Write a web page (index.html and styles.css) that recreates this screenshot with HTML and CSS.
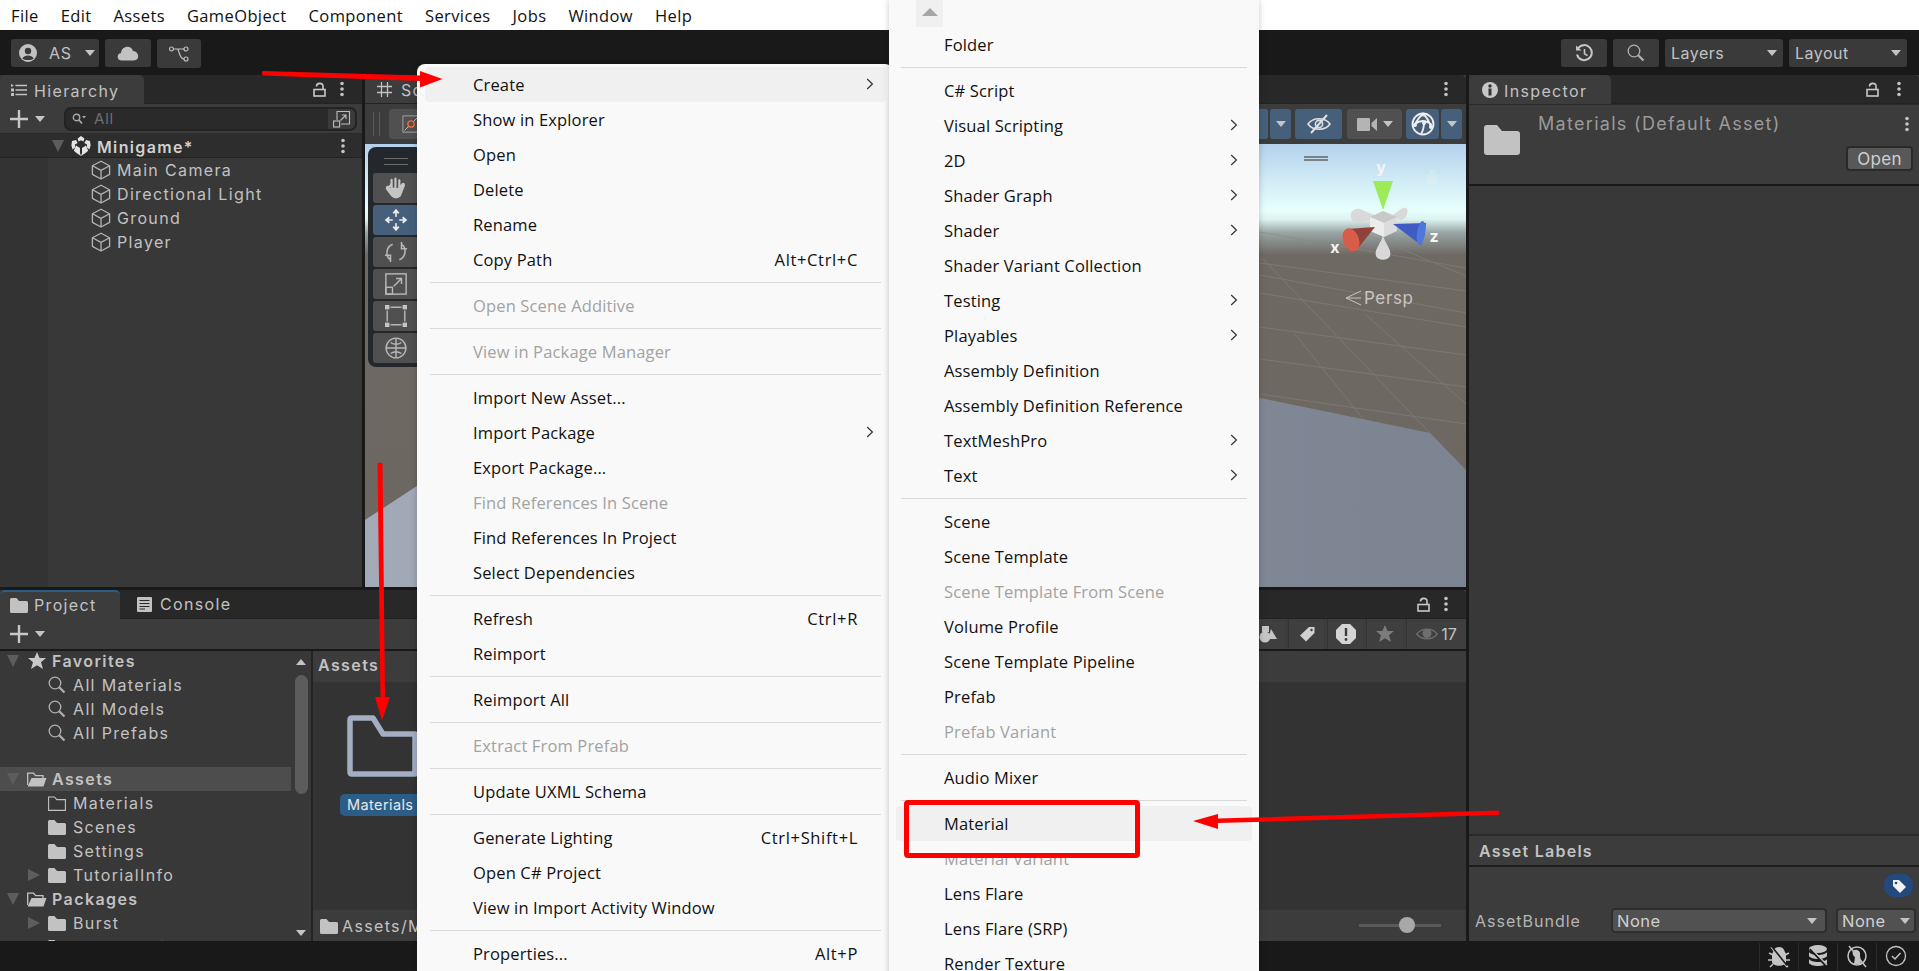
FILE: index.html
```html
<!DOCTYPE html>
<html lang="en">
<head>
<meta charset="utf-8">
<title>Unity Editor</title>
<link rel="stylesheet" href="styles.css">
</head>
<body>
<svg class="defs" width="0" height="0" aria-hidden="true">
  <symbol id="i-folder" viewBox="0 0 18 18"><path d="M0 3.5Q0 2 1.5 2H6.5L9 5H16.5Q18 5 18 6.5V15.5Q18 17 16.5 17H1.5Q0 17 0 15.5Z" fill="#c2c2c2"/></symbol>
  <symbol id="i-folder-open" viewBox="0 0 20 18"><path d="M.7 15V3.2H6.5L8.6 5.7H16V8" fill="none" stroke="#c2c2c2" stroke-width="1.3"/><path d="M.7 16.5L4.5 8H19.5L16.5 16.5Z" fill="#c2c2c2"/></symbol>
  <symbol id="i-folder-line" viewBox="0 0 18 18"><path d="M.6 16.4V3H6.4L8.8 5.6H17.4V16.4Z" fill="none" stroke="#c2c2c2" stroke-width="1.1"/></symbol>
  <symbol id="i-cube" viewBox="0 0 20 20"><path d="M10 1.2L18.6 5.8V14.4L10 19L1.4 14.4V5.8ZM1.4 5.8L10 10.4L18.6 5.8M10 10.4V19" fill="none" stroke="#b4b4b4" stroke-width="1.3" stroke-linejoin="round"/></symbol>
  <symbol id="i-unity" viewBox="0 0 20 20"><path d="M10 0L13.4 2.6L12.4 5.6L10 4.2L7.6 5.6L6.6 2.6ZM1 5L5 4L6.6 7L4 8.6V11.4L1.6 13.6L.4 9.6ZM19 5L19.6 9.6L18.4 13.6L16 11.4V8.6L13.4 7L15 4ZM5 9.5L9 12V17L10 20L5.5 17L2.8 14.8ZM15 9.5L17.2 14.8L14.5 17L10 20L11 17V12Z" fill="#e4e4e4"/></symbol>
  <symbol id="i-search" viewBox="0 0 18 18"><circle cx="7" cy="7" r="5.8" fill="none" stroke="#b0b0b0" stroke-width="1.3"/><path d="M11.2 11.2L16.5 16.5" stroke="#b0b0b0" stroke-width="2.2"/></symbol>
  <symbol id="i-lock" viewBox="0 0 13 15"><rect x="1" y="7.5" width="11" height="6.5" fill="none" stroke="#c8c8c8" stroke-width="1.6"/><path d="M3.5 4.5C3.5 .4 10 .4 10 4V7.5" fill="none" stroke="#c8c8c8" stroke-width="1.6"/></symbol>
  <symbol id="i-kebab" viewBox="0 0 4 16"><circle cx="2" cy="2.5" r="1.8" fill="#c4c4c4"/><circle cx="2" cy="8" r="1.8" fill="#c4c4c4"/><circle cx="2" cy="13.5" r="1.8" fill="#c4c4c4"/></symbol>
  <symbol id="i-plus" viewBox="0 0 18 18"><path d="M9 0V18M0 9H18" stroke="#c8c8c8" stroke-width="2.4"/></symbol>
  <symbol id="i-caret" viewBox="0 0 10 6"><path d="M0 0H10L5 6Z" fill="#c4c4c4"/></symbol>
  <symbol id="i-down" viewBox="0 0 12 12"><path d="M0 0H12L6 12Z" fill="#5d5d5d"/></symbol>
  <symbol id="i-right" viewBox="0 0 12 12"><path d="M0 0L12 6L0 12Z" fill="#5d5d5d"/></symbol>
  <symbol id="i-chev" viewBox="0 0 8 12"><path d="M1.2 1L6.4 6L1.2 11" fill="none" stroke="#333" stroke-width="1.2"/></symbol>
</svg>

<div class="app">
  <nav class="menubar">
    <span class="mb-item">File</span><span class="mb-item">Edit</span><span class="mb-item">Assets</span><span class="mb-item">GameObject</span><span class="mb-item">Component</span><span class="mb-item">Services</span><span class="mb-item">Jobs</span><span class="mb-item">Window</span><span class="mb-item">Help</span>
  </nav>

  <header class="toolbar">
    <div class="tb-group">
      <div class="tb-btn tb-account">
        <svg class="ic18" viewBox="0 0 18 18"><circle cx="9" cy="9" r="9" fill="#c2c2c2"/><circle cx="9" cy="7" r="3.2" fill="#3a3a3a"/><path d="M3.4 14.5C5 10.6 13 10.6 14.6 14.5C13 16.6 5 16.6 3.4 14.5Z" fill="#3a3a3a"/></svg>
        <span class="tb-label">AS</span>
        <svg class="ic-caret" ><use href="#i-caret"/></svg>
      </div>
      <div class="tb-btn tb-cloud">
        <svg class="ic-cloud" viewBox="0 0 22 16"><path d="M5 15.5C-.6 15.5-.6 8.5 4 8C4.5 1 14 -.6 16 6C22.5 6.5 23 15.5 17 15.5Z" fill="#c2c2c2"/></svg>
      </div>
      <div class="tb-btn tb-collab">
        <svg class="ic-collab" viewBox="0 0 20 16"><g fill="none" stroke="#c2c2c2" stroke-width="1.2"><circle cx="2.5" cy="3" r="2"/><circle cx="17" cy="3" r="2"/><circle cx="17" cy="13" r="2"/><path d="M4.5 3H15M8 3C10.5 3 10 13 15 13"/></g></svg>
      </div>
    </div>
    <div class="tb-group">
      <div class="tb-btn tb-square">
        <svg class="ic18" viewBox="0 0 18 18"><path d="M3 4.5A7.5 7.5 0 1 1 2 10.5" fill="none" stroke="#c6c6c6" stroke-width="2"/><path d="M1 1.5L6.5 6.5H1Z" fill="#c6c6c6"/><path d="M9.5 5V9.8L12.5 11.6" fill="none" stroke="#c6c6c6" stroke-width="1.6"/></svg>
      </div>
      <div class="tb-btn tb-square"><svg class="ic18"><use href="#i-search"/></svg></div>
      <div class="tb-btn tb-drop"><span>Layers</span><svg class="ic-caret"><use href="#i-caret"/></svg></div>
      <div class="tb-btn tb-drop"><span>Layout</span><svg class="ic-caret"><use href="#i-caret"/></svg></div>
    </div>
  </header>

  <main class="workspace">
    <div class="left-col">
      <div class="top-row">
        <section class="panel hierarchy">
          <div class="tabstrip">
            <div class="tab">
              <svg class="ic-tab" viewBox="0 0 16 12"><path d="M4.5 1.5H16M4.5 6H16M4.5 10.5H16" stroke="#c2c2c2" stroke-width="1.3"/><path d="M0 0L3 1.5L0 3ZM0 4.5H3V7.5H0ZM0 9H3V12H0Z" fill="#c2c2c2"/></svg>
              <span>Hierarchy</span>
            </div>
            <div class="strip-actions"><svg class="ic-lock"><use href="#i-lock"/></svg><svg class="ic-kebab"><use href="#i-kebab"/></svg></div>
          </div>
          <div class="pbar">
            <div class="add"><svg class="ic-plus"><use href="#i-plus"/></svg><svg class="ic-caret"><use href="#i-caret"/></svg></div>
            <div class="searchbox">
              <div class="sb-field"><svg class="ic-sb" viewBox="0 0 14 12"><circle cx="4.5" cy="4.5" r="3.2" fill="none" stroke="#a8a8a8" stroke-width="1.4"/><path d="M7 7L10 10.5" stroke="#a8a8a8" stroke-width="1.8"/><path d="M10 3H14L12 5.4Z" fill="#a8a8a8"/></svg><span>All</span></div>
              <div class="sb-btn"><svg class="ic18" viewBox="0 0 18 18"><g fill="none" stroke="#bdbdbd" stroke-width="1.1"><path d="M4 10V1.5H16.5V14H8"/><rect x=".6" y="11" width="6" height="6"/><path d="M7.5 10.5L13 5M9 5H13V9"/></g></svg></div>
            </div>
          </div>
          <div class="h-scene">
            <svg class="ic-down-s"><use href="#i-down"/></svg>
            <svg class="ic-unity"><use href="#i-unity"/></svg>
            <strong>Minigame*</strong>
            <svg class="ic-kebab h-kebab"><use href="#i-kebab"/></svg>
          </div>
          <div class="h-body">
            <div class="h-row"><svg class="ic-cube"><use href="#i-cube"/></svg><span>Main Camera</span></div>
            <div class="h-row"><svg class="ic-cube"><use href="#i-cube"/></svg><span>Directional Light</span></div>
            <div class="h-row"><svg class="ic-cube"><use href="#i-cube"/></svg><span>Ground</span></div>
            <div class="h-row"><svg class="ic-cube"><use href="#i-cube"/></svg><span>Player</span></div>
          </div>
        </section>

        <section class="panel scene">
          <div class="tabstrip">
            <div class="scene-tab">
              <svg class="ic-hash" viewBox="0 0 15 15"><path d="M4.5 0V15M10.5 0V15M0 4.5H15M0 10.5H15" stroke="#c2c2c2" stroke-width="1.3"/></svg>
              <span>Scene</span>
            </div>
            <div class="strip-actions"><svg class="ic-kebab"><use href="#i-kebab"/></svg></div>
          </div>
          <div class="scene-bar">
            <div class="sb-left">
              <div class="grip"></div>
              <div class="sbtn sbtn-gray sbtn-tool"><svg class="ic18" viewBox="0 0 20 20"><rect x="1" y="1" width="18" height="18" fill="none" stroke="#aaa" stroke-width="1"/><circle cx="10" cy="10" r="3.5" fill="none" stroke="#f06a32" stroke-width="1.6"/><path d="M3 17L7 13M13 7L17 3" stroke="#c8c8c8" stroke-width="1"/></svg></div>
            </div>
            <div class="sb-right">
              <div class="sbtn sbtn-blue sbtn-fill"></div>
              <div class="sbtn sbtn-blue sbtn-caret"><svg class="ic-caret"><use href="#i-caret"/></svg></div>
              <div class="sbtn sbtn-blue sbtn-vis"><svg class="ic-eye" viewBox="0 0 24 20"><path d="M1 10C6 3 18 3 23 10C18 17 6 17 1 10Z" fill="none" stroke="#e0e0e0" stroke-width="1.6"/><circle cx="12" cy="10" r="3.6" fill="none" stroke="#e0e0e0" stroke-width="1.6"/><path d="M4 19L20 1" stroke="#e0e0e0" stroke-width="2"/></svg></div>
              <div class="sbtn sbtn-gray sbtn-cam"><svg class="ic-cam" viewBox="0 0 20 15"><rect y="1" width="13" height="13" rx="1" fill="#b4b4b4"/><path d="M14.5 6L20 1V14L14.5 9Z" fill="#b4b4b4"/></svg><svg class="ic-caret"><use href="#i-caret"/></svg></div>
              <div class="sbtn sbtn-blue sbtn-gizmo"><svg class="ic-gizmo" viewBox="0 0 24 24"><g fill="none" stroke="#eee" stroke-width="1.800"><circle cx="12" cy="12" r="10.500"/><path d="M12 2C7 6 5 10 3 14M12 2C17 6 19 11 20 16M4 12C9 8 15 8 21 13M13 10C13 15 12 19 10 22"/></g><circle cx="12" cy="2.500" r="2" fill="#eee"/><circle cx="13" cy="11" r="2" fill="#eee"/><circle cx="4" cy="13" r="2" fill="#eee"/><circle cx="20" cy="15" r="2" fill="#eee"/></svg></div>
              <div class="sbtn sbtn-blue sbtn-caret"><svg class="ic-caret"><use href="#i-caret"/></svg></div>
            </div>
          </div>
          <div class="viewport">
            <svg class="vp-ground" viewBox="0 0 1101 443" preserveAspectRatio="none" aria-hidden="true">
              <defs><linearGradient id="plane" x1="0" x2="1" y1="0" y2="0"><stop offset="0" stop-color="#a3aab8"/><stop offset=".5" stop-color="#858c9b"/><stop offset="1" stop-color="#7c8391"/></linearGradient></defs>
              <g stroke="#8d8781" stroke-width="1" fill="none" opacity=".5">
                <path d="M895 88L1101 124M895 119L1101 147M895 131L1101 169M895 149L1101 183M895 183L1101 211M895 215L1101 243M895 250L1101 280"/>
                <path d="M897 114L1065 289M1000 90L1101 132M930 190L1010 290M1000 170L1101 260"/>
              </g>
              <polygon points="0,376 275,196 895,254 1065,289 1101,326 1101,443 0,443" fill="url(#plane)"/>
            </svg>
            <svg class="gizmo" viewBox="0 0 140 150" aria-hidden="true">
              <path d="M-6 8H18M-6 11H18" stroke="#666" stroke-width="1.4"/>
              <path d="M64 66L50 60C44 59 40 63 41 68C42 74 47 75 52 73L64 70Z" fill="#d9d9d9"/>
              <path d="M83 66L91 60C96 57 99 60 97 65C95 71 91 72 88 70L82 68Z" fill="#d9d9d9"/>
              <path d="M73 86C71 95 64 100 66 107C68 112 78 112 80 107C82 100 75 95 73 86Z" fill="#d8d8d8"/>
              <path d="M60 68L73 62L87 68L74 74Z" fill="#c8c8c8"/>
              <path d="M60 68L74 74V88L60 82Z" fill="#ececec"/>
              <path d="M87 68L74 74V88L87 82Z" fill="#dcdcdc"/>
              <path d="M63 32L83 32L73 61Z" fill="#9cec58"/>
              <path d="M65 78L37 80C32 84 33 95 38 101L45 103Z" fill="#8f423a"/>
              <ellipse cx="41" cy="91" rx="8" ry="12" transform="rotate(-20 41 91)" fill="#d95b4a"/>
              <path d="M83 75L116 74L115 85L111 96Z" fill="#3f5cc4"/>
              <ellipse cx="111" cy="84" rx="4" ry="12" transform="rotate(8 111 84)" fill="#4f77de"/>
              <text class="gz-label" x="71" y="24" text-anchor="middle">y</text>
              <text class="gz-label" x="124" y="93" text-anchor="middle">z</text>
              <text class="gz-label" x="25" y="104" text-anchor="middle">x</text>
              <path d="M117 26H127V35H117ZM119 26C119 19 125 19 125 24" fill="#e9eef0" opacity=".35" stroke="#e9eef0" stroke-width="1"/>
            </svg>
            <div class="persp">
              <svg class="ic-persp" viewBox="0 0 16 16"><path d="M16 1L1 8L16 15M16 8H1" fill="none" stroke="#c9c5c2" stroke-width="1"/></svg>
              <span>Persp</span>
            </div>
            <div class="tools">
              <div class="tools-grip"></div>
              <div class="tool"><svg class="ic-tool" viewBox="0 0 20 20"><path d="M3 9L6 14V4.5M6 9V2.5M9.500 9V1.500M13 9V3M13 10L16 6.500C17 6 17.500 7 17 8L13.500 17C12 19 8 19 6.500 17L2 11C1 9.500 2.500 8.500 3 9" fill="#c4c4c4" stroke="#c4c4c4" stroke-width="2" stroke-linecap="round" stroke-linejoin="round"/></svg></div>
              <div class="tool tool-on"><svg class="ic-tool" viewBox="0 0 20 20"><path d="M10 1V19M1 10H19M7.500 4L10 1L12.500 4M7.500 16L10 19L12.500 16M4 7.500L1 10L4 12.500M16 7.500L19 10L16 12.500" fill="none" stroke="#eee" stroke-width="1.5"/><circle cx="10" cy="10" r="3" fill="#46607c"/></svg></div>
              <div class="tool"><svg class="ic-tool" viewBox="0 0 20 20"><path d="M7 3C1 5 0 14 5 17M13 17C19 15 20 6 15 3M15 1V7H20M5 19V13H0" fill="none" stroke="#b8b8b8" stroke-width="1.4"/></svg></div>
              <div class="tool"><svg class="ic-tool" viewBox="0 0 20 20"><g fill="none" stroke="#b8b8b8" stroke-width="1.3"><rect x=".8" y=".8" width="18.400" height="18.400"/><rect x=".8" y="13" width="6" height="6.200"/><path d="M8 12L15 5M10 5H15V10"/></g></svg></div>
              <div class="tool"><svg class="ic-tool" viewBox="0 0 20 20"><g fill="#c4c4c4"><rect width="4" height="4"/><rect x="16" width="4" height="4"/><rect y="16" width="4" height="4"/><rect x="16" y="16" width="4" height="4"/></g><path d="M5 2H15M5 18H15M2 5V15M18 5V15" stroke="#b8b8b8" stroke-width="1.300"/></svg></div>
              <div class="tool"><svg class="ic-tool" viewBox="0 0 20 20"><g fill="none" stroke="#b8b8b8" stroke-width="1.300"><circle cx="10" cy="10" r="9"/><path d="M10 1V19M1 10H19M5 5C8 7 12 7 15 5M5 15C8 13 12 13 15 15"/></g></svg></div>
            </div>
          </div>
        </section>
      </div>

      <section class="panel project">
        <div class="tabstrip">
          <div class="tab tab-project"><svg class="ic18"><use href="#i-folder"/></svg><span>Project</span></div>
          <div class="tab-off"><svg class="ic-console" viewBox="0 0 15 15"><rect width="15" height="15" rx="1" fill="#c2c2c2"/><path d="M2.500 3.500H12.500M2.500 6.500H12.500M2.500 9.500H12.500M2.500 12H8" stroke="#2a2a2a" stroke-width="1.200"/></svg><span>Console</span></div>
          <div class="strip-actions"><svg class="ic-lock"><use href="#i-lock"/></svg><svg class="ic-kebab"><use href="#i-kebab"/></svg></div>
        </div>
        <div class="pbar pbar-project">
          <div class="add"><svg class="ic-plus"><use href="#i-plus"/></svg><svg class="ic-caret"><use href="#i-caret"/></svg></div>
          <div class="filters">
            <div class="filter"><svg class="ic-fl" viewBox="0 0 18 18"><circle cx="6" cy="12" r="5.500" fill="#c4c4c4"/><path d="M3 1H10V7H3Z" fill="#c4c4c4"/><path d="M12 4L18 14H9Z" fill="#c4c4c4"/></svg></div>
            <div class="filter"><svg class="ic-fl" viewBox="0 0 18 18"><path d="M11 2H16.500V8L8 16.500L2 10.500Z" fill="#d0d0d0"/><circle cx="13.500" cy="5" r="1.200" fill="#3c3c3c"/></svg></div>
            <div class="filter"><svg class="ic-fl ic-fl-l" viewBox="0 0 20 20"><path d="M6 0H14L20 6V14L14 20H6L0 14V6Z" fill="#d4d4d4"/><path d="M10 4V12" stroke="#3c3c3c" stroke-width="2.400"/><circle cx="10" cy="15.500" r="1.400" fill="#3c3c3c"/></svg></div>
            <div class="filter filter-w"><svg class="ic-fl" viewBox="0 0 18 18"><path d="M9 0L11.600 6H18L13 10.200L15 17L9 13.200L3 17L5 10.200L0 6H6.400Z" fill="#7c7c7c"/></svg></div>
            <div class="filter filter-eye"><svg class="ic-eye2" viewBox="0 0 22 14"><path d="M.7 7C6 .5 16 .5 21.300 7C16 13.500 6 13.500 .7 7Z" fill="none" stroke="#6e6e6e" stroke-width="1.300"/><circle cx="11" cy="6.500" r="4.500" fill="#6e6e6e"/></svg><span>17</span></div>
          </div>
        </div>
        <div class="proj-body">
          <div class="proj-tree">
            <div class="tree-col">
              <div class="t-row t-root"><svg class="ic-t"><use href="#i-down"/></svg><svg class="ic-star" viewBox="0 0 18 18"><path d="M9 0L11.600 6H18L13 10.200L15 17L9 13.200L3 17L5 10.200L0 6H6.400Z" fill="#c8c8c8"/></svg><strong>Favorites</strong></div>
              <div class="t-row t-leaf"><svg class="ic18"><use href="#i-search"/></svg><span>All Materials</span></div>
              <div class="t-row t-leaf"><svg class="ic18"><use href="#i-search"/></svg><span>All Models</span></div>
              <div class="t-row t-leaf"><svg class="ic18"><use href="#i-search"/></svg><span>All Prefabs</span></div>
              <div class="t-gap"></div>
              <div class="t-row t-root t-sel"><svg class="ic-t"><use href="#i-down"/></svg><svg class="ic-star"><use href="#i-folder-open"/></svg><strong>Assets</strong></div>
              <div class="t-row t-leaf"><svg class="ic18"><use href="#i-folder-line"/></svg><span>Materials</span></div>
              <div class="t-row t-leaf"><svg class="ic18"><use href="#i-folder"/></svg><span>Scenes</span></div>
              <div class="t-row t-leaf"><svg class="ic18"><use href="#i-folder"/></svg><span>Settings</span></div>
              <div class="t-row t-leaf t-arrow"><svg class="ic-t"><use href="#i-right"/></svg><svg class="ic18"><use href="#i-folder"/></svg><span>TutorialInfo</span></div>
              <div class="t-row t-root"><svg class="ic-t"><use href="#i-down"/></svg><svg class="ic-star"><use href="#i-folder-open"/></svg><strong>Packages</strong></div>
              <div class="t-row t-leaf t-arrow"><svg class="ic-t"><use href="#i-right"/></svg><svg class="ic18"><use href="#i-folder"/></svg><span>Burst</span></div>
              <div class="t-row t-leaf"><svg class="ic18"><use href="#i-folder"/></svg><span>Core RP Library</span></div>
            </div>
            <div class="scrollbar">
              <svg class="sc-up" viewBox="0 0 10 6"><path d="M0 6H10L5 0Z" fill="#c4c4c4"/></svg>
              <div class="sc-thumb"></div>
              <svg class="ic-caret sc-dn"><use href="#i-caret"/></svg>
            </div>
          </div>
          <div class="proj-main">
            <div class="pm-head"><strong>Assets</strong></div>
            <div class="pm-grid">
              <svg class="big-folder" viewBox="0 0 71 62"><path d="M3 5Q3 3 5 3H26L36 19H68V59H5Q3 59 3 57Z" fill="none" stroke="#a3aec4" stroke-width="5.500" stroke-linejoin="round"/></svg>
              <div class="pill">Materials</div>
            </div>
            <div class="pm-foot">
              <div class="pm-path"><svg class="ic18"><use href="#i-folder"/></svg><span>Assets/Materials</span></div>
              <div class="slider"><div class="knob"></div></div>
            </div>
          </div>
        </div>
      </section>
    </div>

    <aside class="panel inspector">
      <div class="tabstrip">
        <div class="tab tab-insp"><svg class="ic-info" viewBox="0 0 16 16"><circle cx="8" cy="8" r="8" fill="#c8c8c8"/><rect x="6.500" y="6.500" width="3" height="7" fill="#333"/><circle cx="8" cy="4" r="1.700" fill="#333"/></svg><span>Inspector</span></div>
        <div class="strip-actions"><svg class="ic-lock"><use href="#i-lock"/></svg><svg class="ic-kebab"><use href="#i-kebab"/></svg></div>
      </div>
      <div class="in-head">
        <svg class="ic-infolder"><use href="#i-folder"/></svg>
        <div class="in-title">Materials (Default Asset)</div>
        <svg class="ic-kebab in-kebab"><use href="#i-kebab"/></svg>
        <div class="in-open">Open</div>
      </div>
      <div class="in-body"></div>
      <div class="in-labels"><strong>Asset Labels</strong></div>
      <div class="in-foot">
        <div class="tag-row"><div class="tag-btn"><svg class="ic-tag" viewBox="0 0 16 16"><path d="M2 2H8L15 9L9 15L2 8Z" fill="#f2f2f2"/><circle cx="5" cy="5" r="1.300" fill="#24497f"/></svg></div></div>
        <div class="bundle-row">
          <span class="b-label">AssetBundle</span>
          <div class="b-drop b-main"><span>None</span><svg class="ic-caret"><use href="#i-caret"/></svg></div>
          <div class="b-drop b-var"><span>None</span><svg class="ic-caret"><use href="#i-caret"/></svg></div>
        </div>
      </div>
    </aside>
  </main>

  <footer class="status">
    <div class="st-btn"><svg class="ic-st" viewBox="0 0 22 24"><path d="M6 6C7 2 15 2 16 6L18 10V18C17 23 5 23 4 18V10Z" fill="#c4c4c4"/><path d="M3 3L19 23M1 9L5 11M21 9L17 11M0 16H4M22 16H18M2 23L5 20M20 23L17 20" stroke="#c4c4c4" stroke-width="1.500"/><path d="M3 1.500L19 21.500" stroke="#191919" stroke-width="1.500"/></svg></div>
    <div class="st-btn"><svg class="ic-st" viewBox="0 0 22 24"><ellipse cx="11" cy="5" rx="9" ry="4" fill="#c4c4c4"/><path d="M2 8C4 12 18 12 20 8V12C18 16 4 16 2 12ZM2 15C4 19 18 19 20 15V19C18 23 4 23 2 19Z" fill="#c4c4c4"/><path d="M3 5L20 23" stroke="#191919" stroke-width="2"/><path d="M3 3L20 21" stroke="#c4c4c4" stroke-width="1.300"/></svg></div>
    <div class="st-btn"><svg class="ic-st" viewBox="0 0 22 24"><circle cx="11" cy="12" r="9" fill="none" stroke="#c4c4c4" stroke-width="1.500"/><path d="M7 7C10 4 15 7 14 11L15 20H8L9 13C7 12 6 9 7 7Z" fill="#c4c4c4"/><path d="M3 2L20 23" stroke="#c4c4c4" stroke-width="1.500"/></svg></div>
    <div class="st-btn st-last"><svg class="ic-st" viewBox="0 0 22 24"><circle cx="11" cy="12" r="9.500" fill="none" stroke="#c4c4c4" stroke-width="1.300"/><path d="M7 12L10 15L15.500 9" fill="none" stroke="#c4c4c4" stroke-width="1.500"/></svg></div>
  </footer>

  <div class="menu menu-main">
    <div class="mi mi-hover"><span>Create</span><svg class="chev"><use href="#i-chev"/></svg></div>
    <div class="mi"><span>Show in Explorer</span></div>
    <div class="mi"><span>Open</span></div>
    <div class="mi"><span>Delete</span></div>
    <div class="mi"><span>Rename</span></div>
    <div class="mi"><span>Copy Path</span><span class="sc">Alt+Ctrl+C</span></div>
    <div class="sep"></div>
    <div class="mi off"><span>Open Scene Additive</span></div>
    <div class="sep"></div>
    <div class="mi off"><span>View in Package Manager</span></div>
    <div class="sep"></div>
    <div class="mi"><span>Import New Asset...</span></div>
    <div class="mi"><span>Import Package</span><svg class="chev"><use href="#i-chev"/></svg></div>
    <div class="mi"><span>Export Package...</span></div>
    <div class="mi off"><span>Find References In Scene</span></div>
    <div class="mi"><span>Find References In Project</span></div>
    <div class="mi"><span>Select Dependencies</span></div>
    <div class="sep"></div>
    <div class="mi"><span>Refresh</span><span class="sc">Ctrl+R</span></div>
    <div class="mi"><span>Reimport</span></div>
    <div class="sep"></div>
    <div class="mi"><span>Reimport All</span></div>
    <div class="sep"></div>
    <div class="mi off"><span>Extract From Prefab</span></div>
    <div class="sep"></div>
    <div class="mi"><span>Update UXML Schema</span></div>
    <div class="sep"></div>
    <div class="mi"><span>Generate Lighting</span><span class="sc">Ctrl+Shift+L</span></div>
    <div class="mi"><span>Open C# Project</span></div>
    <div class="mi"><span>View in Import Activity Window</span></div>
    <div class="sep"></div>
    <div class="mi"><span>Properties...</span><span class="sc">Alt+P</span></div>
  </div>

  <div class="menu menu-sub">
    <div class="scroll-up"><div class="scroll-tri"></div></div>
    <div class="mi"><span>Folder</span></div>
    <div class="sep"></div>
    <div class="mi"><span>C# Script</span></div>
    <div class="mi"><span>Visual Scripting</span><svg class="chev"><use href="#i-chev"/></svg></div>
    <div class="mi"><span>2D</span><svg class="chev"><use href="#i-chev"/></svg></div>
    <div class="mi"><span>Shader Graph</span><svg class="chev"><use href="#i-chev"/></svg></div>
    <div class="mi"><span>Shader</span><svg class="chev"><use href="#i-chev"/></svg></div>
    <div class="mi"><span>Shader Variant Collection</span></div>
    <div class="mi"><span>Testing</span><svg class="chev"><use href="#i-chev"/></svg></div>
    <div class="mi"><span>Playables</span><svg class="chev"><use href="#i-chev"/></svg></div>
    <div class="mi"><span>Assembly Definition</span></div>
    <div class="mi"><span>Assembly Definition Reference</span></div>
    <div class="mi"><span>TextMeshPro</span><svg class="chev"><use href="#i-chev"/></svg></div>
    <div class="mi"><span>Text</span><svg class="chev"><use href="#i-chev"/></svg></div>
    <div class="sep"></div>
    <div class="mi"><span>Scene</span></div>
    <div class="mi"><span>Scene Template</span></div>
    <div class="mi off"><span>Scene Template From Scene</span></div>
    <div class="mi"><span>Volume Profile</span></div>
    <div class="mi"><span>Scene Template Pipeline</span></div>
    <div class="mi"><span>Prefab</span></div>
    <div class="mi off"><span>Prefab Variant</span></div>
    <div class="sep"></div>
    <div class="mi"><span>Audio Mixer</span></div>
    <div class="sep"></div>
    <div class="mi mi-hover"><span>Material</span></div>
    <div class="mi off"><span>Material Variant</span></div>
    <div class="mi"><span>Lens Flare</span></div>
    <div class="mi"><span>Lens Flare (SRP)</span></div>
    <div class="mi"><span>Render Texture</span></div>
  </div>

  <svg class="annotations" viewBox="0 0 1919 971" aria-hidden="true">
    <g fill="#ff0000" stroke="none">
      <path d="M263 71L420 75.500L420 71L442.500 79L420 87.500L420 81L263 75.500Q260.500 73 263 71Z"/>
      <path d="M377.500 463.500Q380 461.500 382.500 463.500L385 697H390L382 720.500L375 697H380.500Z"/>
      <path d="M1498 810.500Q1501 812.500 1498 815L1218 823V829L1193 821L1218 814V818.500Z"/>
    </g>
    <rect x="906.500" y="802.500" width="231" height="53" rx="1.500" fill="none" stroke="#ff0000" stroke-width="5"/>
  </svg>
</div>
</body>
</html>
```

FILE: styles.css
```css
* { box-sizing: border-box; }
html, body { margin: 0; padding: 0; height: 100%; overflow: hidden; background: #191919; }
svg { display: block; flex: none; }
.defs { position: absolute; }

.app {
  position: relative;
  width: 1919px;
  height: 971px;
  overflow: hidden;
  display: flex;
  flex-direction: column;
  font-family: Inter, "Liberation Sans", sans-serif;
  font-size: 16px;
  letter-spacing: 1.35px;
  color: #c2c2c2;
}

/* Windows menu bar */
.menubar {
  height: 30px;
  flex: none;
  background: #fff;
  display: flex;
  align-items: center;
  font-family: "Open Sans", "Liberation Sans", sans-serif;
  font-size: 16.5px;
  letter-spacing: .38px;
  color: #111;
}
.mb-item { padding: 0 11px; }

/* Main toolbar */
.toolbar {
  height: 45px;
  flex: none;
  display: flex;
  align-items: center;
  justify-content: space-between;
  padding: 1px 12px 0 11px;
  background: #191919;
}
.tb-group { display: flex; align-items: center; gap: 6px; }
.tb-btn {
  height: 28px;
  background: #3a3a3a;
  border-radius: 3px;
  display: flex;
  align-items: center;
}
.tb-account { width: 88px; padding-left: 8px; gap: 12px; }
.tb-label { width: 24px; font-size: 16px; letter-spacing: .6px; }
.tb-cloud { width: 46px; justify-content: center; }
.tb-collab { width: 44px; height: 29px; justify-content: center; margin-top: 1px; }
.tb-square { width: 46px; justify-content: center; }
.tb-drop { width: 118px; justify-content: space-between; padding: 0 6px; font-size: 16px; letter-spacing: .5px; }
.ic18 { width: 18px; height: 18px; }
.ic-caret { width: 10px; height: 6px; }
.ic-cloud { width: 22px; height: 16px; }
.ic-collab { width: 20px; height: 16px; }

/* Workspace */
.workspace { flex: 1; min-height: 0; display: flex; gap: 3px; }
.left-col { width: 1466px; flex: none; display: flex; flex-direction: column; gap: 3px; }
.top-row { height: 512px; flex: none; display: flex; gap: 3px; }
.panel { display: flex; flex-direction: column; min-width: 0; }
.hierarchy { width: 362px; flex: none; background: #383838; }
.scene { flex: 1; background: #3c3c3c; }
.project { flex: 1; min-height: 0; background: #383838; }
.inspector { flex: 1; background: #383838; }

.tabstrip {
  height: 29px;
  flex: none;
  position: relative;
  display: flex;
  align-items: stretch;
  background: #282828;
  border-bottom: 1px solid #222;
  border-radius: 5px 5px 0 0;
}
.tab {
  display: flex;
  align-items: center;
  width: 144px;
  padding-left: 11px;
  gap: 7px;
  background: #3c3c3c;
  border-radius: 5px 5px 0 0;
  margin-bottom: -1px;
}
.tab span, .tab-off span, .scene-tab span { position: relative; top: 1px; }
.ic-tab { width: 16px; height: 12px; }
.strip-actions {
  margin-left: auto;
  display: flex;
  align-items: center;
  gap: 14px;
  padding-right: 18px;
}
.ic-lock { width: 13px; height: 15px; }
.ic-kebab { width: 4px; height: 16px; }

.pbar {
  height: 30px;
  flex: none;
  display: flex;
  align-items: center;
  background: #3c3c3c;
  border-bottom: 1px solid #2a2a2a;
  padding-left: 10px;
}
.add { display: flex; align-items: center; gap: 7px; width: 54px; }
.ic-plus { width: 18px; height: 18px; }
.searchbox {
  width: 293px;
  height: 24px;
  display: flex;
  background: #252525;
  border-radius: 7px;
  border: 2px solid #232323;
}
.sb-field { flex: 1; display: flex; align-items: center; gap: 8px; padding-left: 6px; color: #6f6f6f; font-size: 15px; letter-spacing: .8px; background: #2a2a2a; border-radius: 5px 0 0 5px; }
.ic-sb { width: 14px; height: 12px; }
.sb-btn { width: 27px; background: #3a3a3a; display: flex; align-items: center; justify-content: center; border-radius: 0 5px 5px 0; }

.h-scene {
  height: 24px;
  flex: none;
  display: flex;
  align-items: center;
  padding-left: 52px;
  background: #2d2d2d;
  border-bottom: 1px solid #222;
  position: relative;
}
.ic-down-s { width: 12px; height: 12px; margin-right: 7px; }
.ic-unity { width: 20px; height: 20px; }
.h-scene strong { position: relative; top: 1px; margin-left: 6px; font-weight: 600; color: #d0d0d0; }
.h-kebab { margin-left: auto; margin-right: 17px; }
.h-body {
  flex: 1;
  background: linear-gradient(90deg, #333 48px, #383838 48px);
}
.h-row { height: 24px; display: flex; align-items: center; padding-left: 91px; gap: 6px; }
.ic-cube { width: 20px; height: 20px; }

/* Scene */
.scene-tab { display: flex; align-items: center; gap: 9px; padding-left: 12px; background: #3c3c3c; width: 140px; border-radius: 5px 5px 0 0; }
.ic-hash { width: 15px; height: 15px; }
.scene .strip-actions { padding-right: 18px; }
.scene-bar {
  height: 40px;
  flex: none;
  display: flex;
  align-items: center;
  justify-content: space-between;
  background: #3c3c3c;
  padding: 0 4px 0 8px;
}
.sb-left, .sb-right { display: flex; align-items: center; }
.sb-right { gap: 2px; }
.grip { width: 7px; height: 24px; border-left: 1px solid #5a5a5a; border-right: 1px solid #5a5a5a; margin-right: 9px; }
.sbtn { height: 30px; display: flex; align-items: center; justify-content: center; border-radius: 3px; }
.sbtn-blue { background: #46607c; }
.sbtn-gray { background: #505050; }
.sbtn-tool { width: 44px; }
.sbtn-fill { width: 40px; }
.sbtn-caret { width: 21px; }
.sbtn-vis { width: 47px; margin: 0 3px 0 2px; }
.sbtn-cam { width: 55px; gap: 6px; margin-right: 2px; }
.sbtn-gizmo { width: 33px; }
.ic-eye { width: 24px; height: 20px; }
.ic-cam { width: 20px; height: 15px; }
.ic-gizmo { width: 24px; height: 24px; }

.viewport {
  position: relative;
  flex: 1;
  overflow: hidden;
  background: linear-gradient(180deg, #b3d1ec 0%, #d3eef6 9%, #e6fffc 15%, #dcf3ef 17%, #98a5a4 20%, #6f6964 25%, #6d6762 100%);
}
.vp-ground { position: absolute; inset: 0; width: 100%; height: 100%; }
.gizmo { position: absolute; left: 945px; top: 5px; width: 140px; height: 150px; overflow: visible; }
.gz-label { font-family: Inter, sans-serif; font-size: 16px; font-weight: 700; fill: #f4f4f4; letter-spacing: 0; }
.persp { position: absolute; left: 980px; top: 144px; display: flex; align-items: center; gap: 3px; color: #c9c5c2; font-size: 17px; letter-spacing: .6px; }
.ic-persp { width: 16px; height: 16px; }
.tools {
  position: absolute;
  left: 3px;
  top: 3px;
  width: 56px;
  height: 220px;
  padding: 5px;
  display: flex;
  flex-direction: column;
  gap: 2px;
  background: #24282c;
  border-radius: 8px;
}
.tools-grip { height: 19px; flex: none; margin: 0 8px; position: relative; }
.tools-grip::before {
  content: "";
  display: block;
  width: 24px;
  height: 5px;
  margin: 6px auto 0;
  border-top: 1px solid #6c6c6c;
  border-bottom: 1px solid #6c6c6c;
}
.tool { height: 30px; flex: none; background: #505050; display: flex; align-items: center; justify-content: center; border-radius: 3px; }
.tool-on { background: #46607c; }
.ic-tool { width: 22px; height: 22px; }

/* Project */
.tab-project { width: 120px; gap: 6px; padding: 0 0 2px 10px; border-top: 2px solid #2c5d87; }
.tab-off { display: flex; align-items: center; gap: 8px; padding-left: 17px; }
.tab-project span, .tab-off span { top: 0; }
.ic-console { width: 15px; height: 15px; }
.pbar-project { height: 32px; justify-content: space-between; border-bottom: 2px solid #191919; padding-right: 0; }
.filters { display: flex; align-items: stretch; height: 30px; gap: 3px; }
.filter { width: 36px; background: #3f3f3f; display: flex; align-items: center; justify-content: center; border-left: 1px solid #333; }
.filter-w { width: 37px; }
.filter-eye { width: 60px; gap: 3px; }
.filter-eye span { font-size: 16px; letter-spacing: 0; color: #c2c2c2; }
.ic-fl { width: 18px; height: 18px; }
.ic-fl-l { width: 20px; height: 20px; }
.ic-eye2 { width: 22px; height: 14px; }

.proj-body { flex: 1; min-height: 0; display: flex; overflow: hidden; }
.proj-tree { width: 311px; flex: none; display: flex; background: #383838; }
.tree-col { width: 291px; flex: none; margin-top: -2px; overflow: hidden; }
.t-row { height: 24px; display: flex; align-items: center; }
.t-root { padding-left: 7px; }
.t-root strong { font-weight: 600; margin-left: 5px; letter-spacing: 1.4px; }
.t-leaf { padding-left: 48px; gap: 7px; }
.t-arrow { padding-left: 28px; }
.t-arrow .ic-t { margin-right: 1px; }
.t-sel { background: #4d4d4d; }
.t-gap { height: 22px; }
.ic-t { width: 12px; height: 12px; }
.ic-star { width: 20px; height: 18px; margin-left: 8px; }
.scrollbar { flex: 1; position: relative; display: flex; flex-direction: column; align-items: center; padding-top: 8px; }
.sc-up { width: 10px; height: 6px; }
.sc-thumb { width: 13px; height: 119px; margin-top: 10px; background: #5c5c5c; border-radius: 7px; }
.sc-dn { margin-top: 136px; }
.proj-main { flex: 1; display: flex; flex-direction: column; border-left: 2px solid #232323; background: #333; }
.pm-head { height: 31px; flex: none; display: flex; align-items: center; padding: 0 0 4px 5px; background: #3c3c3c; }
.pm-head strong { font-weight: 600; letter-spacing: 1.4px; }
.pm-grid { flex: 1; padding: 33px 0 0 27px; }
.big-folder { width: 71px; height: 62px; margin-left: 7px; }
.pill { width: 90px; height: 22px; margin-top: 17px; padding-left: 7px; background: #2c5d87; border-radius: 5px; color: #e8e8e8; font-size: 14.500px; letter-spacing: .4px; line-height: 22px; }
.pm-foot { height: 31px; flex: none; display: flex; align-items: center; justify-content: space-between; background: #3c3c3c; padding: 0 25px 0 7px; }
.pm-path { display: flex; align-items: center; gap: 4px; }
.slider { width: 82px; height: 3px; background: #5a5a5a; position: relative; }
.knob { position: absolute; left: 40px; top: -7px; width: 16px; height: 16px; background: #a8a8a8; border-radius: 50%; }

/* Inspector */
.tab-insp { width: 142px; gap: 6px; padding-left: 13px; }
.ic-info { width: 16px; height: 16px; }
.inspector .strip-actions { gap: 18px; padding-right: 18px; }
.in-head {
  height: 82px;
  flex: none;
  position: relative;
  background: #3c3c3c;
  border-bottom: 2px solid #191919;
  border-top: 1px solid #2a2a2a;
}
.ic-infolder { position: absolute; left: 15px; top: 16px; width: 36px; height: 36px; }
.in-title { position: absolute; left: 69px; top: 8px; font-size: 18px; letter-spacing: 1.3px; color: #9a9a9a; }
.in-kebab { position: absolute; right: 10px; top: 11px; }
.in-open { position: absolute; right: 6px; top: 41px; width: 67px; height: 25px; background: #585858; border: 2px solid #2a2a2a; border-radius: 4px; text-align: center; font-size: 17px; line-height: 22px; letter-spacing: .3px; color: #d0d0d0; }
.in-body { flex: 1; }
.in-labels { height: 33px; flex: none; display: flex; align-items: center; padding-left: 10px; background: #3c3c3c; border-top: 2px solid #2a2a2a; border-bottom: 2px solid #1e1e1e; }
.in-labels strong { font-weight: 600; letter-spacing: 1.25px; font-size: 16px; }
.in-foot { height: 74px; flex: none; background: #3c3c3c; padding-top: 7px; }
.tag-row { display: flex; justify-content: flex-end; padding-right: 6px; height: 34px; }
.tag-btn { width: 29px; height: 23px; background: #24497f; border-radius: 10px; display: flex; align-items: center; justify-content: center; }
.ic-tag { width: 16px; height: 16px; }
.bundle-row { display: flex; align-items: center; padding-left: 6px; }
.b-label { width: 136px; flex: none; color: #b5b5b5; letter-spacing: 1px; }
.b-drop { height: 25px; background: #515151; border: 2px solid #2e2e2e; border-radius: 4px; display: flex; align-items: center; justify-content: space-between; padding: 0 8px 0 4px; letter-spacing: .5px; color: #d0d0d0; font-size: 16.500px; }
.b-main { width: 216px; margin-right: 9px; }
.b-var { width: 80px; padding-right: 4px; }

/* Status bar */
.status { height: 30px; flex: none; display: flex; justify-content: flex-end; align-items: center; padding-right: 4px; background: #191919; }
.st-btn { width: 39px; height: 27px; display: flex; align-items: center; justify-content: center; border-left: 1px solid #2c2c2c; }
.ic-st { width: 22px; height: 24px; }

/* Windows context menus */
.menu {
  position: absolute;
  display: flex;
  flex-direction: column;
  background: #f9f9f9;
  font-family: "Open Sans", "Liberation Sans", sans-serif;
  font-size: 16.5px;
  letter-spacing: .15px;
  color: #111;
  box-shadow: 0 0 6px rgba(0, 0, 0, .22);
}
.menu-main { left: 417px; top: 64px; width: 476px; padding-top: 3px; border-radius: 8px 8px 0 0; }
.menu-sub { left: 889px; top: 0; width: 370px; }
.mi {
  height: 35px;
  flex: none;
  display: flex;
  align-items: center;
  justify-content: space-between;
  margin: 0 7px 0 8px;
  padding: 0 12px 0 48px;
  border-radius: 4px;
}
.menu-sub .mi { margin: 0 7px; padding-right: 14px; }
.mi-hover { background: #f0f0f0; }
.off { color: #a2a2a2; }
.sc { margin-right: 16px; letter-spacing: .65px; }
.chev { width: 8px; height: 12px; margin-top: -2px; }
.sep { height: 11px; flex: none; margin: 0 12px 0 13px; position: relative; }
.menu-sub .sep { margin: 0 12px; }
.sep::before { content: ""; display: block; height: 1px; margin-top: 5px; background: #d9d9d9; }
.scroll-up { width: 27px; height: 27px; flex: none; margin-left: 27px; background: #f0f0f0; display: flex; align-items: center; justify-content: center; }
.scroll-tri { width: 0; height: 0; margin-bottom: 4px; border-left: 8px solid transparent; border-right: 8px solid transparent; border-bottom: 8px solid #a6a6a6; }

/* Tutorial annotations drawn over the screenshot */
.annotations { position: absolute; inset: 0; width: 1919px; height: 971px; pointer-events: none; }
```
